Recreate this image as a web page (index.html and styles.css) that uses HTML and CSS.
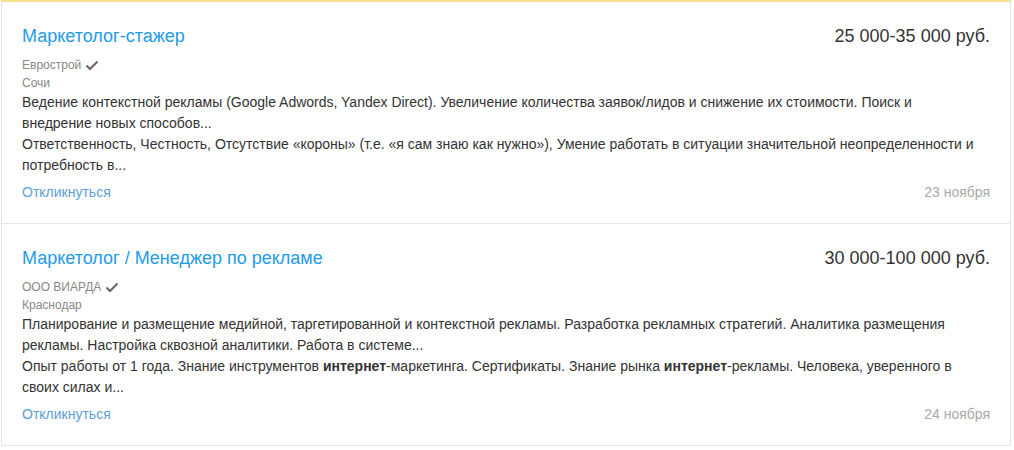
FILE: index.html
```html
<!DOCTYPE html>
<html lang="ru">
<head>
  <meta charset="UTF-8">
  <meta name="viewport" content="width=device-width, initial-scale=1.0">
  <title>Вакансии</title>
  <link rel="stylesheet" href="styles.css">
</head>
<body>

  <div class="list">

    <div class="vacancy">
      <div class="head">
        <a class="title" href="#">Маркетолог-стажер</a>
        <span class="salary">25 000-35 000 руб.</span>
      </div>
      <div class="company">Еврострой
        <svg class="check" width="14" height="11" viewBox="0 0 14 11"><path d="M1.5 5.5 L5 9 L12.5 1.5" fill="none" stroke="#666" stroke-width="2"/></svg>
      </div>
      <div class="city">Сочи</div>
      <p class="text">Ведение контекстной рекламы (Google Adwords, Yandex Direct). Увеличение количества заявок/лидов и снижение их стоимости. Поиск и внедрение новых способов...</p>
      <p class="text">Ответственность, Честность, Отсутствие «короны» (т.е. «я сам знаю как нужно»), Умение работать в ситуации значительной неопределенности и потребность в...</p>
      <div class="foot">
        <a class="reply" href="#">Откликнуться</a>
        <span class="date">23 ноября</span>
      </div>
    </div>

    <div class="vacancy">
      <div class="head">
        <a class="title" href="#">Маркетолог / Менеджер по рекламе</a>
        <span class="salary">30 000-100 000 руб.</span>
      </div>
      <div class="company">ООО ВИАРДА
        <svg class="check" width="14" height="11" viewBox="0 0 14 11"><path d="M1.5 5.5 L5 9 L12.5 1.5" fill="none" stroke="#666" stroke-width="2"/></svg>
      </div>
      <div class="city">Краснодар</div>
      <p class="text">Планирование и размещение медийной, таргетированной и контекстной рекламы. Разработка рекламных стратегий. Аналитика размещения рекламы. Настройка сквозной аналитики. Работа в системе...</p>
      <p class="text">Опыт работы от 1 года. Знание инструментов <b>интернет</b>-маркетинга. Сертификаты. Знание рынка <b>интернет</b>-рекламы. Человека, уверенного в своих силах и...</p>
      <div class="foot">
        <a class="reply" href="#">Откликнуться</a>
        <span class="date">24 ноября</span>
      </div>
    </div>

  </div>

</body>
</html>
```

FILE: styles.css
```css
body {
  font-family: "Liberation Sans", Arial, sans-serif;
  margin: 0;
  padding: 0;
  background-color: #fff;
  color: #333;
}

.list {
  margin: 0 3px 0 1px;
  border-top: 2px solid #f7e08a;
  border-left: 1px solid #e6e6e6;
  border-right: 1px solid #e6e6e6;
}

.vacancy {
  padding: 22px 20px 20px 20px;
  border-bottom: 1px solid #e6e6e6;
}

.head {
  display: flex;
  justify-content: space-between;
  align-items: center;
  line-height: 24px;
}

.title {
  font-size: 18px;
  color: #1e9be9;
  text-decoration: none;
}

.salary {
  font-size: 18px;
  color: #333;
}

.company,
.city {
  font-size: 12px;
  line-height: 18px;
  color: #888;
}

.company {
  margin-top: 8px;
  display: flex;
  align-items: center;
  gap: 4px;
}

.text {
  margin: 0;
  padding-right: 6px;
  font-size: 14px;
  line-height: 21px;
  color: #333;
}

.foot {
  display: flex;
  justify-content: space-between;
  margin-top: 6px;
  font-size: 14px;
  line-height: 21px;
}

.reply {
  color: #5e9ed6;
  text-decoration: none;
}

.date {
  color: #aaa;
}
```
